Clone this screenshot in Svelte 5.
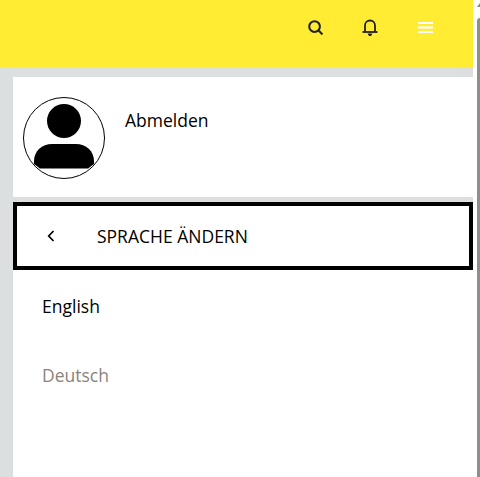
<script>
  const languages = [
    { name: "English", active: true },
    { name: "Deutsch", active: false },
  ];
</script>

<div class="page">
  <div class="main">
    <header class="topbar">
      <button class="icon" aria-label="Suche">
        <svg width="15" height="15" viewBox="0 0 16 16" fill="none" stroke="#222" stroke-width="2.2">
          <circle cx="7" cy="7" r="5.7" />
          <path d="M11.3 11.3 15.4 15.4" />
        </svg>
      </button>
      <button class="icon" aria-label="Benachrichtigungen">
        <svg width="16" height="17" viewBox="0 0 16 17" fill="none" stroke="#222" stroke-width="1.8">
          <path d="M3 12.5V6.5a5 5 0 0 1 10 0V12.5" />
          <path d="M.5 13h15" />
          <path d="M5.6 14.4h4.8l-1 2a1.6 1.6 0 0 1-2.8 0z" fill="#222" stroke="none" />
        </svg>
      </button>
      <button class="icon" aria-label="Menü">
        <svg width="15" height="11" viewBox="0 0 15 11" fill="#fff">
          <rect y="0" width="15" height="2" />
          <rect y="4.4" width="15" height="2.2" />
          <rect y="9" width="15" height="2" />
        </svg>
      </button>
    </header>

    <div class="content">
      <section class="profile">
        <div class="avatar">
          <svg width="82" height="82" viewBox="0 0 82 82">
            <circle cx="41" cy="41" r="40.5" fill="#fff" stroke="#000" />
            <circle cx="41" cy="24" r="17" fill="#000" />
            <path d="M11 67V64C11 54 19 47 29 47H53C63 47 71 54 71 64V67L65 71.5H17Z" fill="#000" />
          </svg>
        </div>
        <a class="logout" href="#top">Abmelden</a>
      </section>

      <section class="panel">
        <div class="heading">
          <svg class="back" width="8" height="12" viewBox="0 0 8 12" fill="none" stroke="#000" stroke-width="1.7">
            <path d="M6.5 1 1.7 6l4.8 5" />
          </svg>
          <span>SPRACHE ÄNDERN</span>
        </div>
        <ul>
          {#each languages as lang}
            <li class:active={lang.active}>{lang.name}</li>
          {/each}
        </ul>
      </section>
    </div>
  </div>

  <div class="scrollbar">
    <div class="arrow"></div>
    <div class="thumb"></div>
  </div>
</div>

<style>
  :global(body) {
    margin: 0;
    font-family: "Open Sans", sans-serif;
  }
  .page {
    display: flex;
    width: 480px;
    height: 477px;
    overflow: hidden;
    background: #fff;
  }
  .main {
    width: 473px;
    flex: none;
    background: #dbdfe0;
  }
  .topbar {
    display: flex;
    justify-content: flex-end;
    align-items: flex-start;
    gap: 39px;
    height: 68px;
    padding: 18px 40px 0 0;
    box-sizing: border-box;
    background: #ffec33;
  }
  .icon {
    display: flex;
    align-items: center;
    justify-content: flex-end;
    width: 16px;
    height: 18px;
    padding: 0;
    border: 0;
    background: none;
  }
  .content {
    padding: 9px 0 0 13px;
  }
  .profile {
    display: flex;
    align-items: flex-start;
    gap: 20px;
    height: 120px;
    padding: 20px 0 0 10px;
    box-sizing: border-box;
    background: #fff;
  }
  .avatar {
    height: 82px;
  }
  .logout {
    margin-top: 12px;
    color: #000;
    font-size: 17.5px;
    line-height: 22px;
    text-decoration: none;
  }
  .panel {
    margin-top: 5px;
    background: #fff;
    height: 280px;
  }
  .heading {
    display: flex;
    align-items: center;
    height: 68px;
    border: 4px solid #000;
    box-sizing: border-box;
    background: #fff;
    font-size: 17.5px;
    color: #000;
  }
  .back {
    margin-left: 30px;
    margin-right: 42px;
  }
  ul {
    list-style: none;
    margin: 0;
    padding: 2px 0 0 29px;
  }
  li {
    height: 69px;
    line-height: 69px;
    font-size: 17.5px;
    color: #8a837c;
  }
  li.active {
    color: #000;
  }
  .scrollbar {
    flex: 1;
    background: #fff;
  }
  .arrow {
    width: 0;
    height: 0;
    margin: 3px 0 0 auto;
    border-left: 3px solid transparent;
    border-right: 0 solid transparent;
    border-bottom: 4px solid #888;
  }
  .thumb {
    width: 3px;
    height: 460px;
    margin: 11px 0 0 auto;
    border-radius: 3px 0 0 0;
    background: #8e8e8e;
  }
</style>
